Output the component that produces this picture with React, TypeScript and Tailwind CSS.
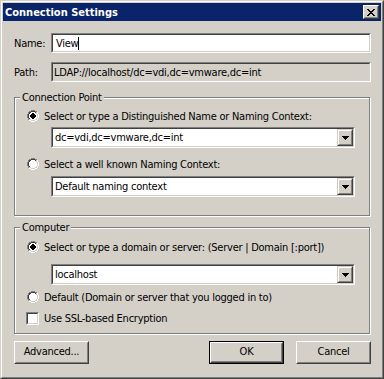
import React from "react";

function Sunken({ className, inner, children }: { className: string; inner: string; children?: React.ReactNode }) {
  return (
    <div className={`border border-t-[#808080] border-l-[#808080] border-b-white border-r-white ${className}`}>
      <div className={`h-full border border-t-[#404040] border-l-[#404040] border-b-[#d4d0c8] border-r-[#d4d0c8] ${inner}`}>{children}</div>
    </div>
  );
}

function Radio({ checked }: { checked?: boolean }) {
  return (
    <svg width="12" height="12" viewBox="0 0 12 12" className="shrink-0" shapeRendering="crispEdges">
      <circle cx="6" cy="6" r="4.5" fill="white" />
      <path d="M2.1 9.9 A5.5 5.5 0 0 1 9.9 2.1" fill="none" stroke="#808080" strokeWidth="1" />
      <path d="M9.9 2.1 A5.5 5.5 0 0 1 2.1 9.9" fill="none" stroke="#ffffff" strokeWidth="1" />
      <path d="M2.8 9.2 A4.5 4.5 0 0 1 9.2 2.8" fill="none" stroke="#404040" strokeWidth="1" />
      <path d="M9.2 2.8 A4.5 4.5 0 0 1 2.8 9.2" fill="none" stroke="#d4d0c8" strokeWidth="1" />
      {checked && <rect x="4" y="4" width="4" height="4" fill="black" />}
      {checked && <rect x="5" y="3" width="2" height="6" fill="black" />}
      {checked && <rect x="3" y="5" width="6" height="2" fill="black" />}
    </svg>
  );
}

function ArrowBtn() {
  return (
    <div className="w-[16px] h-full border border-t-[#d4d0c8] border-l-[#d4d0c8] border-b-[#404040] border-r-[#404040]">
      <div className="h-full border border-t-white border-l-white border-b-[#808080] border-r-[#808080] bg-[#d4d0c8] flex items-center justify-center">
        <svg width="7" height="4" viewBox="0 0 7 4" shapeRendering="crispEdges">
          <rect x="0" y="0" width="7" height="1" fill="black" />
          <rect x="1" y="1" width="5" height="1" fill="black" />
          <rect x="2" y="2" width="3" height="1" fill="black" />
          <rect x="3" y="3" width="1" height="1" fill="black" />
        </svg>
      </div>
    </div>
  );
}

function Combo({ text, className }: { text: string; className: string }) {
  return (
    <Sunken className={`w-[304px] h-[21px] ml-[36px] ${className}`} inner="bg-white flex">
      <div className="flex-1 flex items-center pl-[2px] leading-[13px]">{text}</div>
      <ArrowBtn />
    </Sunken>
  );
}

function Button({ children, def }: { children: React.ReactNode; def?: boolean }) {
  if (def) {
    return (
      <div className="w-[75px] h-[23px] border border-black">
        <div className="h-full border border-t-white border-l-white border-b-[#404040] border-r-[#404040]">
          <div className="h-full border border-t-[#d4d0c8] border-l-[#d4d0c8] border-b-[#808080] border-r-[#808080] flex items-center justify-center">
            {children}
          </div>
        </div>
      </div>
    );
  }
  return (
    <div className="w-[75px] h-[23px] border border-t-white border-l-white border-b-[#404040] border-r-[#404040]">
      <div className="h-full border border-t-[#d4d0c8] border-l-[#d4d0c8] border-b-[#808080] border-r-[#808080] flex items-center justify-center">
        {children}
      </div>
    </div>
  );
}

function Group({ label, className, children }: { label: string; className: string; children: React.ReactNode }) {
  return (
    <div className={`relative ml-[11px] w-[356px] border border-[#808080] shadow-[inset_1px_1px_0_white,1px_1px_0_white] ${className}`}>
      <span className="absolute left-[5px] -top-[7px] px-[2px] bg-[#d4d0c8] leading-[13px]">{label}</span>
      {children}
    </div>
  );
}

export default function App() {
  return (
    <div className="w-[384px] h-[379px] bg-[#d4d0c8] border border-t-[#d4d0c8] border-l-[#d4d0c8] border-b-[#404040] border-r-[#404040] text-[11px] tracking-[-0.25px] text-black [font-family:'DejaVu_Sans_Condensed','DejaVu_Sans',sans-serif]">
      <div className="h-full border border-t-white border-l-white border-b-[#808080] border-r-[#808080] p-px flex flex-col">
        <div className="h-[18px] bg-[#0a246a] flex items-center justify-between pl-[2px]">
          <span className="text-white font-bold text-[11px] tracking-normal leading-[13px]">Connection Settings</span>
          <div className="w-[16px] h-[14px] mr-[2px] border border-t-white border-l-white border-b-[#404040] border-r-[#404040]">
            <div className="h-full border border-t-[#d4d0c8] border-l-[#d4d0c8] border-b-[#808080] border-r-[#808080] bg-[#d4d0c8] flex items-center justify-center">
              <svg width="8" height="7" viewBox="0 0 8 7" shapeRendering="crispEdges">
                <path d="M0 0h2v1H0zM6 0h2v1H6zM1 1h2v1H1zM5 1h2v1H5zM2 2h4v1H2zM3 3h2v1H3zM2 4h4v1H2zM1 5h2v1H1zM5 5h2v1H5zM0 6h2v1H0zM6 6h2v1H6z" fill="black" />
              </svg>
            </div>
          </div>
        </div>

        <div className="flex flex-col">
          <div className="flex items-center pl-[11px] mt-[12px]">
            <span className="w-[37px] leading-[13px]">Name:</span>
            <Sunken className="w-[320px] h-[20px]" inner="bg-white flex items-center pl-[3px]">
              <span className="leading-[13px]">View</span>
              <span className="w-px h-[13px] bg-black" />
            </Sunken>
          </div>
          <div className="flex items-center pl-[11px] mt-[9px]">
            <span className="w-[37px] leading-[13px]">Path:</span>
            <Sunken className="w-[320px] h-[20px]" inner="bg-[#d4d0c8] flex items-center pl-px">
              <span className="leading-[13px]">LDAP://localhost/dc=vdi,dc=vmware,dc=int</span>
            </Sunken>
          </div>

          <Group label="Connection Point" className="mt-[15px] h-[119px]">
            <div className="flex items-center h-[12px] ml-[12px] mt-[12px]">
              <Radio checked />
              <span className="ml-[5px] leading-[13px]">Select or type a Distinguished Name or Naming Context:</span>
            </div>
            <Combo text="dc=vdi,dc=vmware,dc=int" className="mt-[5px]" />
            <div className="flex items-center h-[12px] ml-[12px] mt-[10px]">
              <Radio />
              <span className="ml-[5px] leading-[13px]">Select a well known Naming Context:</span>
            </div>
            <Combo text="Default naming context" className="mt-[6px]" />
          </Group>

          <Group label="Computer" className="mt-[11px] h-[107px]">
            <div className="flex items-center h-[12px] ml-[12px] mt-[13px]">
              <Radio checked />
              <span className="ml-[5px] leading-[13px]">Select or type a domain or server: (Server | Domain [:port])</span>
            </div>
            <Combo text="localhost" className="mt-[11px]" />
            <div className="flex items-center h-[12px] ml-[12px] mt-[6px]">
              <Radio />
              <span className="ml-[5px] leading-[13px]">Default (Domain or server that you logged in to)</span>
            </div>
            <div className="flex items-center h-[13px] ml-[11px] mt-[9px]">
              <Sunken className="w-[13px] h-[13px] shrink-0" inner="bg-white" />
              <span className="ml-[5px] leading-[13px]">Use SSL-based Encryption</span>
            </div>
          </Group>

          <div className="flex items-center mt-[7px] pl-[11px]">
            <Button>Advanced...</Button>
            <div className="ml-[120px]">
              <Button def>OK</Button>
            </div>
            <div className="ml-[12px]">
              <Button>Cancel</Button>
            </div>
          </div>
        </div>
      </div>
    </div>
  );
}
